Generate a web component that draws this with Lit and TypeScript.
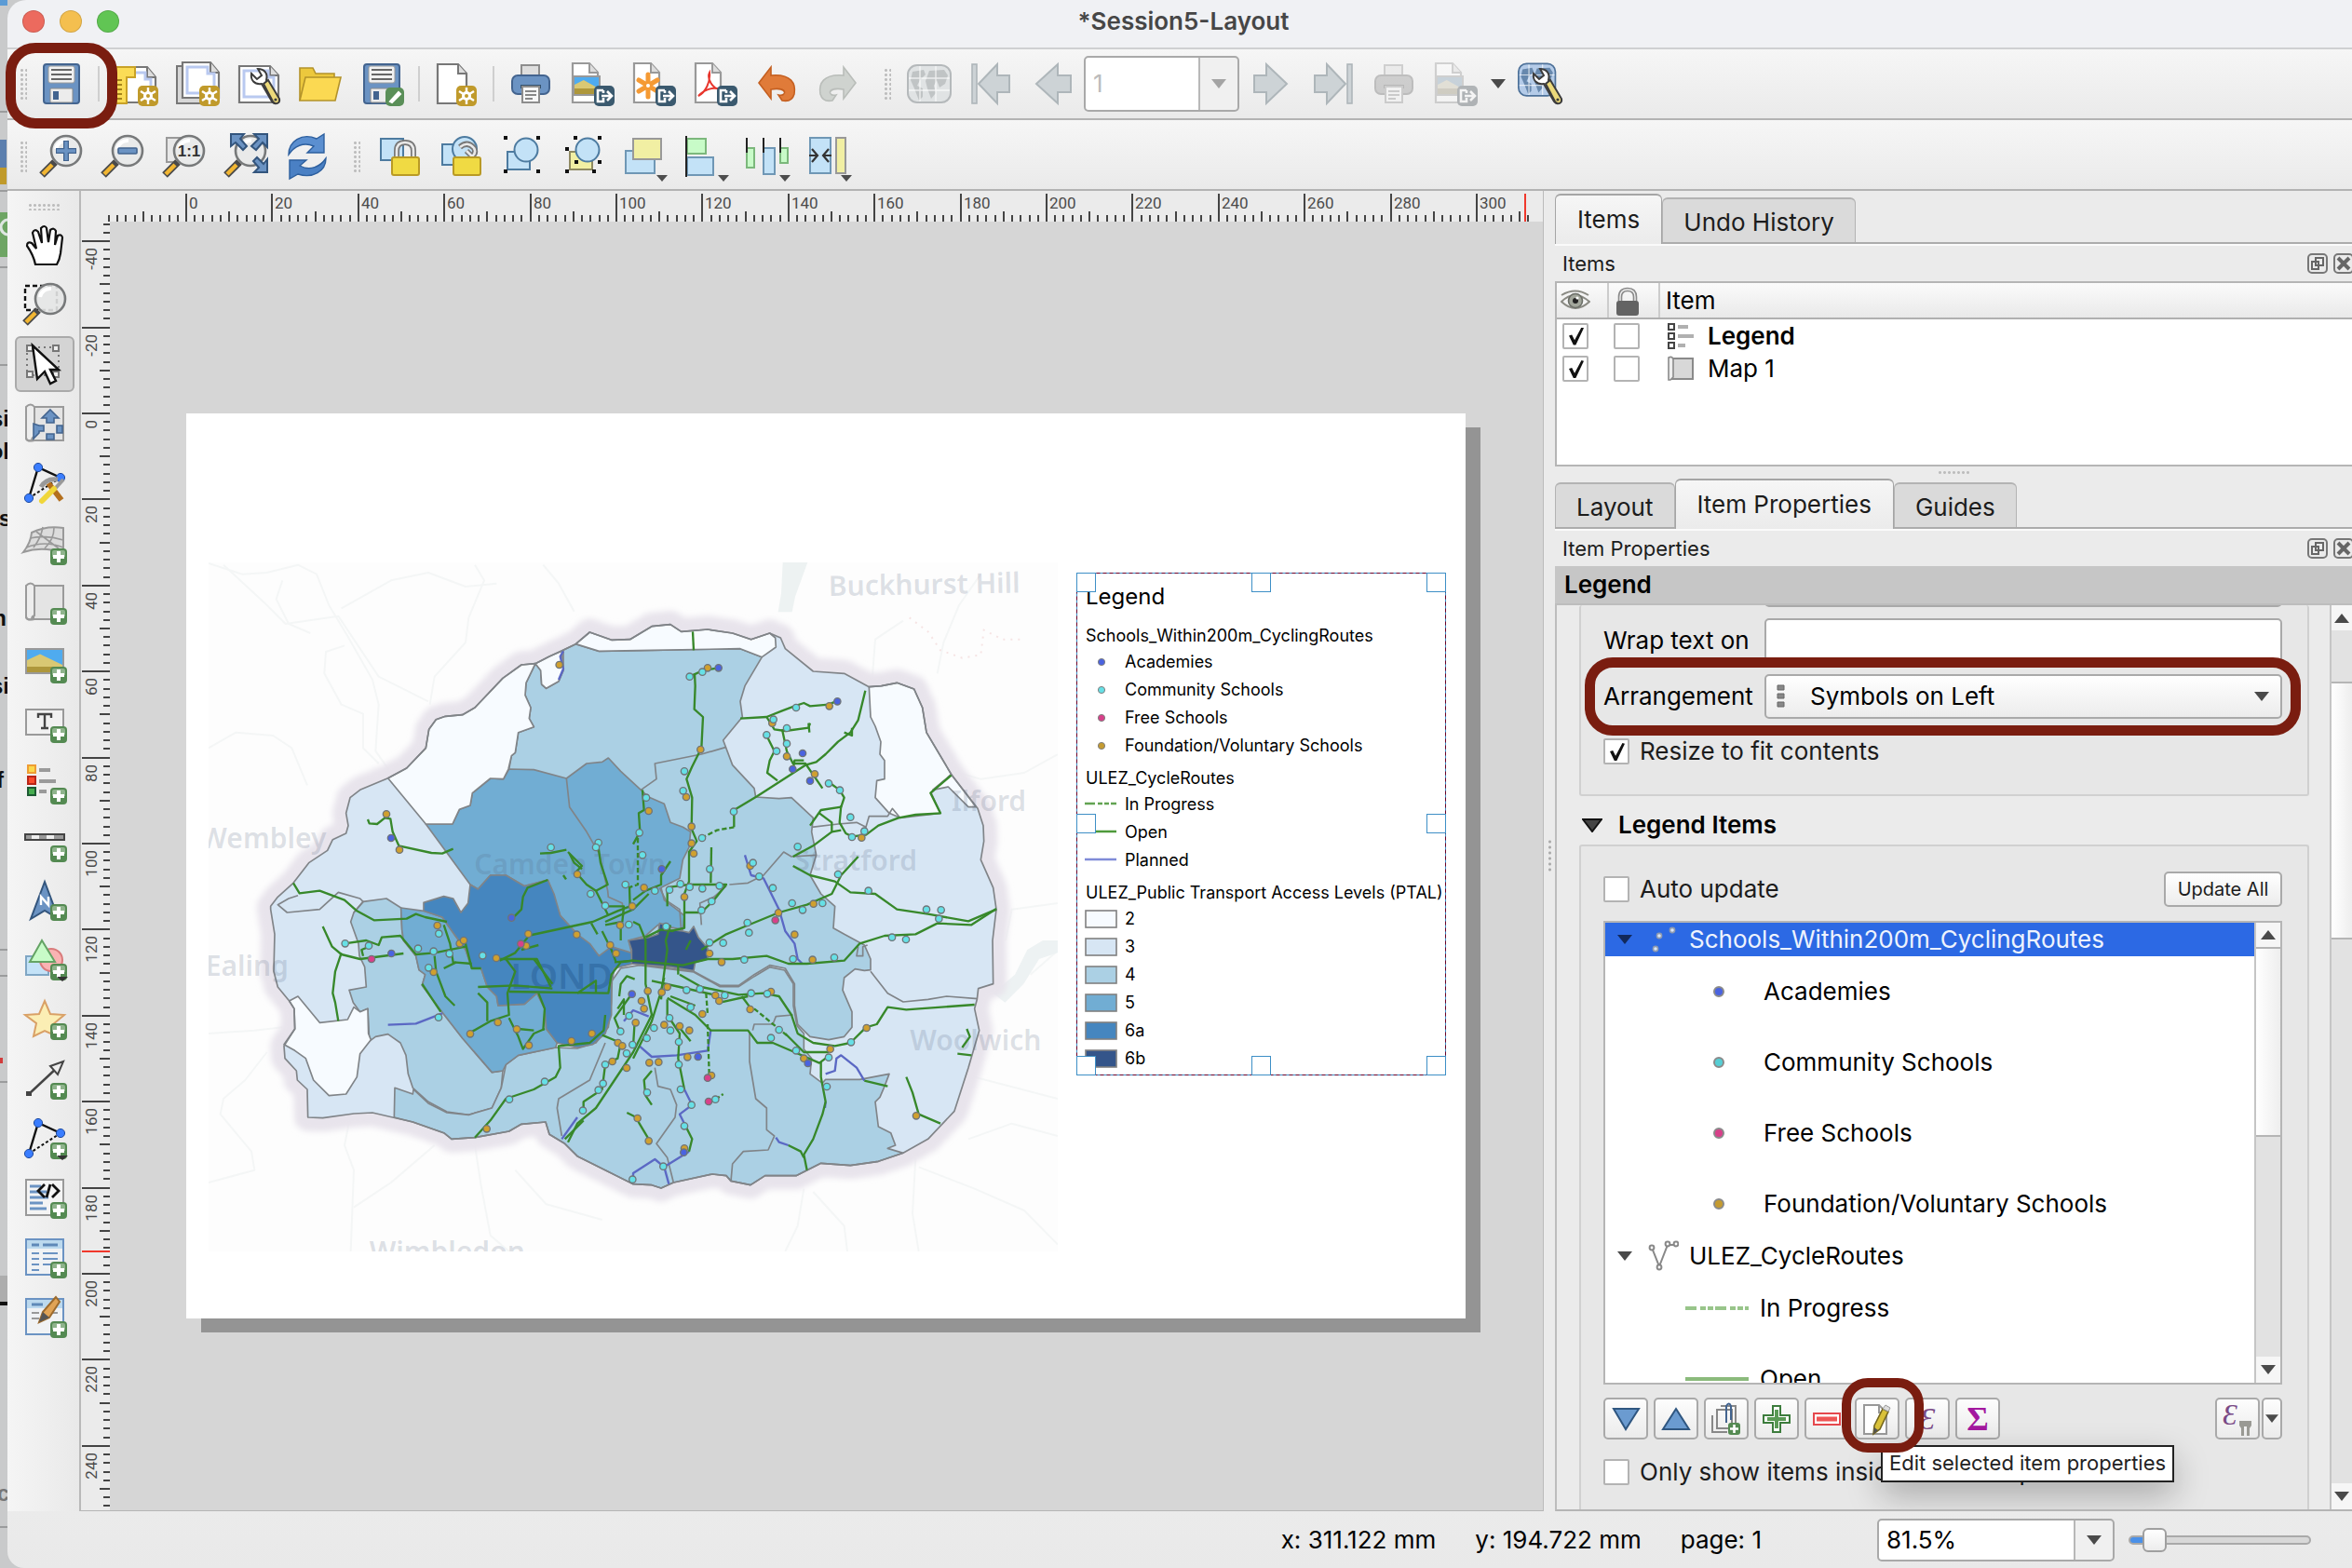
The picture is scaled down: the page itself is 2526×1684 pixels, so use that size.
import { LitElement, html, css, svg, nothing, SVGTemplateResult } from "lit";
import { customElement } from "lit/decorators.js";

/* ---------- icon parts, all on a 48 x 48 grid ---------- */

const plusBadge = (x = 30, y = 28) => svg`<g transform="translate(${x} ${y})">
  <rect width="18" height="18" rx="4" fill="#548a52"/><path d="M2 9V4q0-2 2-2h10q2 0 2 2v5z" fill="#8fb48c"/>
  <path d="M9 3v12M3 9h12" stroke="#fff" stroke-width="4"/></g>`;
const starBadge = (x = 26, y = 26) => svg`<g transform="translate(${x} ${y})">
  <rect width="22" height="22" rx="5" fill="#c09a2b"/><path d="M11 2v18M3 6l16 10M19 6L3 16" stroke="#fff" stroke-width="2.4"/>
  <circle cx="11" cy="11" r="5" fill="#fff"/><circle cx="11" cy="11" r="2" fill="#c09a2b"/></g>`;
const exportBadge = svg`<g transform="translate(26 26)"><rect width="22" height="22" rx="5" fill="#3a596e"/>
  <path d="M10 5H4v12h6v-4M10 5v3M8 11h10M14 6l5 5-5 5" fill="none" stroke="#fff" stroke-width="2.6"/></g>`;
const wrench = svg`<path d="M16 13l6 6 5-4-4-7c7 0 11 5 9 12l13 20c1 5-4 7-7 3L27 24c-8 1-12-4-11-11z" fill="#fff" stroke="#3c3c3c" stroke-width="2"/>
  <path d="M29 24l5-4 12 20c1 5-4 7-7 3z" fill="#ecd97a" stroke="#3c3c3c" stroke-width="2"/><circle cx="42" cy="41" r="1.6" fill="#3c3c3c"/>`;
const lens = svg`<path d="M17 30L3 44" stroke="#4a4a4a" stroke-width="8"/><path d="M14 33L4 43" stroke="#f2b632" stroke-width="4.4"/>
  <circle cx="29" cy="18" r="16" fill="#e9eaea" stroke="#77797a" stroke-width="2.6"/><path d="M18 16a11 11 0 0 1 12-9" stroke="#fff" stroke-width="4" fill="none"/>`;
const floppy = svg`<rect x="5" y="3" width="38" height="42" rx="3" fill="#6b93c3" stroke="#43648f" stroke-width="2"/>
  <rect x="10" y="5" width="28" height="18" rx="2" fill="#f1f1f1" stroke="#9a9a9a"/><path d="M13 9h22M13 14h22M13 19h22" stroke="#666" stroke-width="2"/>
  <rect x="12" y="29" width="24" height="15" rx="1" fill="#ececec" stroke="#8a8a8a"/><rect x="15" y="32" width="6" height="9" fill="#43648f"/>`;
const sheet = (c = "#777") => svg`<path d="M7 2h18l9 10v32H7z" fill="#fff" stroke="${c}" stroke-width="2.2"/><path d="M25 2v10h9" fill="#ddd" stroke="${c}" stroke-width="2"/>`;
const printer = svg`<rect x="14" y="4" width="19" height="16" fill="#dedede" stroke="#8d8d8d" stroke-width="2"/>
  <rect x="4" y="15" width="40" height="20" rx="6" fill="#6b93c3" stroke="#43648f" stroke-width="2"/><rect x="13" y="25" width="22" height="4" fill="#34526f"/>
  <path d="M15 27h18v17H15z" fill="#f7f7f7" stroke="#8d8d8d" stroke-width="2"/><path d="M18 32h12M18 36h12M18 40h8" stroke="#888" stroke-width="2"/>`;
const landscape = (x: number, y: number, w: number, h: number) => svg`<rect x="${x}" y="${y}" width="${w}" height="${h}" fill="#4fabef" stroke="#999" stroke-width="2"/>
  <path d="M${x + 1} ${y + h - 1}v${-h * 0.5}l${w * 0.35} ${-h * 0.25}L${x + w - 1} ${y + h * 0.65}V${y + h - 1}z" fill="#d9c873"/>
  <path d="M${x + 1} ${y + h - 1}v-6h${w - 2}v6z" fill="#ae973b"/>`;
const roll = svg`<path d="M12 6h32v36H12z" fill="#e4e4e4" stroke="#9a9a9a" stroke-width="2"/><path d="M4 6q5-5 9 0v32q-3 1-3 4-6 1-6-3z" fill="#ededed" stroke="#9a9a9a" stroke-width="2"/>
  <path d="M4 39q0 5 9 3" stroke="#9a9a9a" stroke-width="2" fill="none"/>`;
const globe = (fill: string, land: string) => svg`<rect x="1" y="4" width="46" height="40" rx="10" fill="${fill}" stroke="${land}" stroke-width="2"/>
  <path d="M6 11l12-2 2 5-6 6-3 6 6 3v9l-4 4-5-13-4-9zM24 10l16-1 4 6-3 9-6 4-3-8-3 6 2 8-5 6-4-11-2-8z" fill="${land}" opacity=".75"/>
  <path d="M2 18h44M2 31h44M14 5v38M31 5v38" stroke="#fff" stroke-width="1.4" opacity=".7"/>`;
const arrowLeft = svg`<path d="M44 15H30V3L7 24l23 21V33h14z" fill="#cdd3d6" stroke="#aeb6ba" stroke-width="2"/>`;
const arrowRight = svg`<path d="M6 15h13V3l22 21-22 21V33H6z" fill="#cdd3d6" stroke="#aeb6ba" stroke-width="2"/>`;
const turn = (fill: string, stroke: string) => svg`<path d="M5 23L18 6v9c22-2 27 9 25 20-2 7-8 8-13 7l-4-6c9 2 11-9-8-6v10z" fill="${fill}" stroke="${stroke}" stroke-width="1.6"/>`;
const node = (x: number, y: number) => svg`<circle cx="${x}" cy="${y}" r="4.6" fill="#3a7dff" stroke="#1f4a9e"/>`;
const triNodes = svg`<path d="M7 40L17 7l24 11" fill="none" stroke="#111" stroke-width="2.4"/><path d="M7 40l34-22" stroke="#111" stroke-width="2" stroke-dasharray="3 2.4"/>${node(7, 40)}${node(17, 7)}${node(41, 18)}`;
const menuMark = svg`<path d="M37 44h12l-6 7z" fill="#4d4d4d"/>`;
const handles = (pts: number[][]) => pts.map(([x, y]) => svg`<rect x="${x - 2}" y="${y - 2}" width="4" height="4" fill="#111"/>`);

const icons: Record<string, SVGTemplateResult> = {
  save: floppy,
  newLayout: svg`<path d="M4 6h32l9 11v27H4z" fill="#fff" stroke="#777" stroke-width="2.2"/><path d="M36 6v11h9" fill="#ddd" stroke="#777" stroke-width="2"/>
    <path d="M16 12h18v7h6v14" stroke="#b9c9f0" stroke-width="3" fill="none"/><path d="M3 6h20v11h-9v28H3z" fill="#fbdc56" stroke="#c9a227" stroke-width="2"/>
    <path d="M4 20h5M4 25h5M4 30h5M4 35h5M4 40h5" stroke="#a5831c" stroke-width="2"/>${starBadge()}`,
  dupLayout: svg`<path d="M2 5h30v40H2z" fill="#d7d7d7" stroke="#777" stroke-width="2"/><path d="M8 1h30l9 11v27H8z" fill="#fff" stroke="#777" stroke-width="2.2"/>
    <path d="M38 1v11h9" fill="#ddd" stroke="#777" stroke-width="2"/><path d="M13 6h22v7h7v21H13z" fill="none" stroke="#b9c9f0" stroke-width="3"/>${starBadge()}`,
  manager: svg`<path d="M3 5h33l9 10v29H3z" fill="#fff" stroke="#777" stroke-width="2.2"/><path d="M36 5v10h9" fill="#ddd" stroke="#777" stroke-width="2"/>
    <path d="M8 10h26v7h6v21H8z" fill="none" stroke="#b9c9f0" stroke-width="3"/>${wrench}`,
  folder: svg`<path d="M2 7h14l3 6h20v28H2z" fill="#ecc83d" stroke="#b3922a" stroke-width="1.6"/><path d="M8 17h38l-6 25H2z" fill="#fbd952" stroke="#b3922a" stroke-width="1.6"/>`,
  saveAs: svg`${floppy}<g transform="translate(28 28)"><rect width="20" height="20" rx="5" fill="#5a8f58"/><path d="M5 15L14 5l2 2-9 9z" fill="#fff" stroke="#fff" stroke-width="2"/></g>`,
  newPage: svg`<path d="M4 3h22l9 10v32H4z" fill="#fff" stroke="#777" stroke-width="2.2"/><path d="M26 3v10h9" fill="#ddd" stroke="#777" stroke-width="2"/>${starBadge(24, 26)}`,
  print: printer,
  exportImage: svg`<g transform="translate(-4 0)">${sheet("#999")}</g>${landscape(4, 16, 28, 20)}${exportBadge}`,
  exportSvg: svg`<g transform="translate(-4 0)">${sheet("#999")}</g><path d="M18 14v24M8 20l20 12M28 20L8 32" stroke="#f59a34" stroke-width="5" stroke-linecap="round"/><circle cx="18" cy="26" r="2" fill="#fff"/>${exportBadge}`,
  exportPdf: svg`<g transform="translate(-4 0)">${sheet("#999")}</g><path d="M6 37c8-4 13-15 12-25-3 6 3 18 12 18-8-3-17 0-24 7z" fill="none" stroke="#e8352c" stroke-width="2"/>${exportBadge}`,
  undo: turn("#e07b39", "#c45f20"),
  redo: svg`<g transform="translate(48 0) scale(-1 1)">${turn("#cfd3cf", "#b9bdb9")}</g>`,
  atlas: globe("#e0e3e4", "#b5b9bb"),
  first: svg`<rect x="4" y="3" width="5" height="42" fill="#cdd3d6" stroke="#aeb6ba" stroke-width="1.6"/><path d="M44 15H31V3L11 24l20 21V33h13z" fill="#cdd3d6" stroke="#aeb6ba" stroke-width="2"/>`,
  prev: arrowLeft,
  next: arrowRight,
  last: svg`<rect x="40" y="3" width="5" height="42" fill="#cdd3d6" stroke="#aeb6ba" stroke-width="1.6"/><path d="M5 15h13V3l20 21-20 21V33H5z" fill="#cdd3d6" stroke="#aeb6ba" stroke-width="2"/>`,
  printOff: svg`<g opacity=".35" style="filter:grayscale(1)">${printer}</g>`,
  exportOff: svg`<g opacity=".38" style="filter:grayscale(.7)"><g transform="translate(-4 0)">${sheet("#999")}</g>${landscape(4, 16, 28, 20)}${exportBadge}</g>`,
  settings: svg`<g transform="translate(-1 -1) scale(.86)">${globe("#b4cbe8", "#4d7199")}</g>${wrench}`,
  zoomIn: svg`${lens}<path d="M29 7v22M18 18h22" stroke="#43648f" stroke-width="6"/><path d="M29 8v20M19 18h20" stroke="#6b93c3" stroke-width="3.4"/>`,
  zoomOut: svg`${lens}<rect x="19" y="15" width="20" height="6" rx="1" fill="#6b93c3" stroke="#43648f" stroke-width="1.6"/>`,
  zoomActual: svg`<rect x="5" y="4" width="20" height="26" fill="#e8e8e8" stroke="#999" stroke-width="2"/>${lens}<text x="29" y="24" text-anchor="middle" font-family="Liberation Sans, sans-serif" font-weight="700" font-size="17" fill="#333">1:1</text>`,
  zoomFull: svg`${lens}<g fill="#6b93c3" stroke="#33557d" stroke-width="2"><path d="M8 0h14l-4 5 7 8-4 4-8-8-5 4z"/><path d="M47 0v14l-5-5-7 8-5-4 8-8-5-5z"/><path d="M47 41H33l5-5-6-7 4-4 7 7 4-5z"/></g>`,
  refresh: svg`<path d="M4 22C4 8 18-2 34 5l8-5v20H24l7-7C20 8 10 13 4 22z" fill="#5b8fd0" stroke="#2d5f9e" stroke-width="1.4"/>
    <path d="M44 26c0 14-14 22-30 17l-9 5V28h18l-7 6c11 6 22 1 28-8z" fill="#4a80c4" stroke="#2d5f9e" stroke-width="1.4"/>`,
  lock: svg`<rect x="5" y="5" width="24" height="23" fill="#c3e2f7" stroke="#4d7ba0" stroke-width="2"/><path d="M22 27V18q0-9 9-9t9 9v9" fill="none" stroke="#777" stroke-width="6"/><path d="M22 27V18q0-9 9-9t9 9v9" fill="none" stroke="#e9e9e9" stroke-width="2.6"/><rect x="17" y="25" width="29" height="19" rx="2" fill="#f0da43" stroke="#b99a24" stroke-width="2"/>`,
  unlock: svg`<rect x="5" y="11" width="18" height="22" fill="#c3e2f7" stroke="#4d7ba0" stroke-width="2"/><circle cx="29" cy="16" r="13" fill="#c3e2f7" stroke="#4d7ba0" stroke-width="2"/><path d="M24 14q8-7 15 1 3 5-2 9l-6-6" fill="none" stroke="#777" stroke-width="6"/><path d="M24 14q8-7 15 1 3 5-2 9l-6-6" fill="none" stroke="#e9e9e9" stroke-width="2.6"/><rect x="17" y="25" width="29" height="19" rx="2" fill="#f0da43" stroke="#b99a24" stroke-width="2"/>`,
  group: svg`<rect x="9" y="19" width="24" height="19" fill="#c3e2f7" stroke="#4d7ba0" stroke-width="2"/><circle cx="29" cy="17" r="12.5" fill="#c3e2f7" stroke="#4d7ba0" stroke-width="2"/>${handles([[7, 4], [42, 4], [7, 40], [42, 40]])}`,
  ungroup: svg`<rect x="10" y="19" width="24" height="19" fill="#f1efa3" stroke="#8f8a62" stroke-width="2"/><circle cx="29" cy="17" r="12.5" fill="#c3e2f7" stroke="#4d7ba0" stroke-width="2"/>${handles([[16, 4], [42, 4], [7, 16], [7, 40], [36, 40], [42, 30], [17, 30]])}`,
  raise: svg`<rect x="4" y="18" width="31" height="24" fill="#c3e2f7" stroke="#6f97b5" stroke-width="2"/><rect x="12" y="5" width="30" height="22" fill="#f1efa3" stroke="#999" stroke-width="2"/>${menuMark}`,
  align: svg`<rect x="4" y="5" width="20" height="16" fill="#c8fbc8" stroke="#7cb87c" stroke-width="2"/><rect x="4" y="25" width="28" height="19" fill="#c3e2f7" stroke="#6f97b5" stroke-width="2"/><path d="M3 2v44" stroke="#222" stroke-width="2"/>${menuMark}`,
  distribute: svg`<rect x="2" y="15" width="8" height="21" fill="#c8fbc8" stroke="#7cb87c" stroke-width="2"/><rect x="20" y="15" width="12" height="28" fill="#c3e2f7" stroke="#6f97b5" stroke-width="2"/><rect x="38" y="15" width="8" height="16" fill="#c8fbc8" stroke="#7cb87c" stroke-width="2"/><path d="M2 4v16M20 4v16M38 4v16" stroke="#222" stroke-width="2"/>${menuMark}`,
  resize: svg`<rect x="4" y="4" width="22" height="38" fill="#c3e2f7" stroke="#6f97b5" stroke-width="2"/><rect x="32" y="4" width="10" height="38" fill="#f1efa3" stroke="#999" stroke-width="2"/><path d="M3 23h8M27 23h-8M6 16l6 7-6 7M24 16l-6 7 6 7" fill="none" stroke="#333" stroke-width="2.2"/>${menuMark}`,
  pan: svg`<path d="M14 45Q12 35 5 25q0-5 5-3l5 6-4-17q2-5 6-1l4 12-1-16q4-4 6 0l2 15 2-13q4-3 6 1l-1 15 3-10q4-2 5 2l-2 17q-1 7-4 12z" fill="#fff" stroke="#111" stroke-width="2.2"/>`,
  zoomArea: svg`<rect x="3" y="4" width="34" height="26" fill="none" stroke="#111" stroke-width="2.4" stroke-dasharray="5 3"/><path d="M17 30L3 44" stroke="#4a4a4a" stroke-width="8"/><path d="M14 33L4 43" stroke="#f2b632" stroke-width="4.4"/><circle cx="30" cy="18" r="16" fill="#e4e5e5" fill-opacity=".9" stroke="#77797a" stroke-width="2.6"/><path d="M19 16a11 11 0 0 1 12-9" stroke="#fff" stroke-width="4" fill="none"/>`,
  select: svg`<rect x="5" y="6" width="34" height="30" fill="none" stroke="#777" stroke-width="2" stroke-dasharray="2 4"/><g fill="#eee" stroke="#777" stroke-width="2"><rect x="5" y="4" width="6" height="6"/><rect x="33" y="4" width="6" height="6"/><rect x="5" y="32" width="6" height="6"/><rect x="33" y="32" width="6" height="6"/></g><path d="M11 4l5 36 8-8 6 13 6-3-6-12h9z" fill="#fff" stroke="#111" stroke-width="2.4"/>`,
  moveContent: svg`${roll}<g fill="#6b93c3" stroke="#43648f" stroke-width="1.6"><path d="M30 9l9 9h-5v5h-8v-5h-5z"/><path d="M12 24v16l6-6v-2h5v-6h-5z"/><path d="M37 26h6v8h-6zM26 35h8v6h-8z"/></g>`,
  editNodes: svg`${triNodes}<path d="M28 24l14 18" stroke="#b36f1e" stroke-width="6"/><path d="M20 28q6-10 18-8" stroke="#999" stroke-width="5" fill="none"/><path d="M44 20L34 31" stroke="#999" stroke-width="4"/><path d="M34 30L21 43" stroke="#f0d63a" stroke-width="6" stroke-linecap="round"/>`,
  add3d: svg`<path d="M1 34Q9 24 10 13q16-8 34-5v27Q22 27 1 34z" fill="#dcdcdc" stroke="#999" stroke-width="2"/><path d="M8 19q18-4 36 2M4 29q20-8 40 0M22 7q-2 12-10 22M34 8q0 12-10 22M15 12l24 18" fill="none" stroke="#999" stroke-width="1.6"/>${plusBadge(30, 30)}`,
  addMap: svg`${roll}${plusBadge(30, 30)}`,
  addPicture: svg`${landscape(4, 10, 40, 26)}${plusBadge(30, 29)}`,
  addLabel: svg`<rect x="4" y="11" width="40" height="27" fill="#f1f1f1" stroke="#999" stroke-width="2"/><path d="M17 20v-4h14v4M24 16v15M20 31h8" stroke="#444" stroke-width="2.4" fill="none"/>${plusBadge(30, 29)}`,
  addLegend: svg`<g transform="translate(0 3)"><g stroke-width="2"><rect x="6" y="4" width="8" height="8" fill="#fbd84b" stroke="#ee9d34"/><rect x="6" y="16" width="8" height="8" fill="#fb4a2b" stroke="#b82518"/><rect x="6" y="28" width="8" height="8" fill="#46ad4f" stroke="#1d5a33"/></g><path d="M18 9h12M18 21h18M18 32h8" stroke="#9a9a9a" stroke-width="4"/>${plusBadge()}</g>`,
  addScale: svg`<rect x="3" y="17" width="42" height="6" fill="#eee" stroke="#444" stroke-width="2"/><path d="M4 20h6M18 20h8M34 20h10" stroke="#999" stroke-width="4"/>${plusBadge(30, 29)}`,
  addNorth: svg`<path d="M24 4L9 44l15-9 15 9z" fill="#6b93c3" stroke="#33557d" stroke-width="2"/><path d="M20 29V20l8 9V20" fill="none" stroke="#fff" stroke-width="2.4"/>${plusBadge()}`,
  addShape: svg`<rect x="4" y="20" width="24" height="20" fill="#c3e2f7" stroke="#7fa6c4" stroke-width="2"/><circle cx="31" cy="24" r="12" fill="#f9b3b3" stroke="#d97b7b" stroke-width="2"/><path d="M21 3l14 23H8z" fill="#c8fbc8" stroke="#64a364" stroke-width="2"/>${plusBadge()}<path d="M37 42h12l-6 5z" fill="#333"/>`,
  addStar: svg`<path d="M24 4l6 14 15 1-12 10 4 13-13-6-12 6 3-14L3 19l15-1z" fill="#fbeeb4" stroke="#d9a066" stroke-width="2"/>${plusBadge()}`,
  addArrow: svg`<path d="M7 40L38 11" stroke="#444" stroke-width="2.4"/><path d="M44 5L30 10l8 9z" fill="#eee" stroke="#444" stroke-width="2"/><rect x="4" y="37" width="6" height="5" fill="#444"/>${plusBadge()}`,
  addNodes: svg`${triNodes}${plusBadge()}<path d="M37 42h12l-6 5z" fill="#333"/>`,
  addHtml: svg`<rect x="4" y="4" width="40" height="38" fill="#f4f4f4" stroke="#999" stroke-width="2"/><path d="M8 11h12M8 17h18M8 23h20M8 29h14M8 35h18" stroke="#6b93c3" stroke-width="3"/><path d="M24 9l-7 7 7 7M32 9l7 7-7 7M30 9l-4 14" fill="none" stroke="#111" stroke-width="2.8"/>${plusBadge()}`,
  addTable: svg`<rect x="4" y="4" width="40" height="38" fill="#f0f2f4" stroke="#6b93c3" stroke-width="2"/><rect x="5" y="5" width="38" height="9" fill="#bcd9ee"/><path d="M10 10h8M22 10h16" stroke="#5f89b8" stroke-width="3"/><path d="M10 19h8M22 19h16M10 25h8M22 25h16M10 31h8M22 31h10M10 37h8" stroke="#6b93c3" stroke-width="2"/>${plusBadge()}`,
  addFixed: svg`<rect x="4" y="4" width="40" height="38" fill="#f0f2f4" stroke="#6b93c3" stroke-width="2"/><rect x="5" y="5" width="38" height="9" fill="#bcd9ee"/><path d="M10 10h12" stroke="#5f89b8" stroke-width="3"/><path d="M10 19h8M10 25h8M24 19h14" stroke="#999" stroke-width="2"/><path d="M36 2l-14 16-4 11 11-5L40 7z" fill="#e0a355" stroke="#9c6a2c" stroke-width="2"/><path d="M22 18l-4 11 11-5z" fill="#555"/>${plusBadge()}`,
};

const ico = (name: string) => html`<svg class="ico" viewBox="0 0 48 48" aria-hidden="true">${icons[name]}</svg>`;
const tri = (dir: "up" | "down") =>
  html`<svg class="tri" viewBox="0 0 16 12" aria-hidden="true"><path d=${dir === "up" ? "M0 11L8 1l8 10z" : "M0 1h16L8 11z"} fill="#4a4a4a"/></svg>`;

/* ---------- toolbars ---------- */

type Tool = { id: string; label: string } | "sep" | "grip";
const mainTools: Tool[] = [
  "sep",
  { id: "newLayout", label: "New Layout" }, { id: "dupLayout", label: "Duplicate Layout" }, { id: "manager", label: "Layout Manager" },
  { id: "folder", label: "Add Items from Template" }, { id: "saveAs", label: "Save as Template" }, "sep",
  { id: "newPage", label: "Add Pages" }, "sep",
  { id: "print", label: "Print" }, { id: "exportImage", label: "Export as Image" }, { id: "exportSvg", label: "Export as SVG" },
  { id: "exportPdf", label: "Export as PDF" }, { id: "undo", label: "Undo" }, { id: "redo", label: "Redo" }, "grip",
  { id: "atlas", label: "Preview Atlas" }, { id: "first", label: "First Feature" }, { id: "prev", label: "Previous Feature" },
];
const atlasTools: Tool[] = [
  { id: "next", label: "Next Feature" }, { id: "last", label: "Last Feature" }, { id: "printOff", label: "Print Atlas" },
];
const viewTools: Tool[] = [
  { id: "zoomIn", label: "Zoom In" }, { id: "zoomOut", label: "Zoom Out" }, { id: "zoomActual", label: "Zoom to 100%" },
  { id: "zoomFull", label: "Zoom Full" }, { id: "refresh", label: "Refresh View" }, "grip",
  { id: "lock", label: "Lock Selected Items" }, { id: "unlock", label: "Unlock All Items" }, { id: "group", label: "Group Items" },
  { id: "ungroup", label: "Ungroup Items" }, { id: "raise", label: "Raise Selected Items" }, { id: "align", label: "Align Selected Items" },
  { id: "distribute", label: "Distribute Items" }, { id: "resize", label: "Resize Items" },
];
const sideTools: [string, string][] = [
  ["pan", "Pan Layout"], ["zoomArea", "Zoom"], ["select", "Select/Move Item"], ["moveContent", "Move Item Content"],
  ["editNodes", "Edit Nodes Item"], ["add3d", "Add 3D Map"], ["addMap", "Add Map"], ["addPicture", "Add Picture"],
  ["addLabel", "Add Label"], ["addLegend", "Add Legend"], ["addScale", "Add Scale Bar"], ["addNorth", "Add North Arrow"],
  ["addShape", "Add Shape"], ["addStar", "Add Marker"], ["addArrow", "Add Arrow"], ["addNodes", "Add Node Item"],
  ["addHtml", "Add HTML"], ["addTable", "Add Attribute Table"], ["addFixed", "Add Fixed Table"],
];

/* ---------- map data, three units per screen pixel ---------- */

const outline = "212,1150 235,1120 285,1075 335,1010 395,970 412,935 455,915 462,890 455,850 468,800 500,775 590,737 650,705 712,640 722,580 745,548 775,538 830,533 870,510 960,415 1020,372 1065,368 1110,345 1195,305 1240,267 1310,292 1370,290 1400,272 1440,248 1500,242 1535,265 1620,258 1700,270 1760,290 1820,270 1855,285 1870,320 1960,393 2060,400 2140,443 2180,440 2230,430 2285,450 2312,510 2325,590 2405,725 2490,835 2508,890 2510,940 2500,1000 2540,1090 2550,1160 2538,1260 2540,1400 2492,1415 2488,1450 2480,1480 2495,1550 2460,1670 2415,1810 2330,1900 2250,1945 2170,1972 2080,1985 1985,1978 1905,2018 1805,2018 1758,2048 1695,2035 1680,2018 1635,2013 1510,2040 1470,2058 1440,2048 1380,2045 1200,1955 1160,1915 1110,1885 1098,1845 1020,1852 980,1875 870,1895 795,1900 770,1880 670,1845 540,1815 480,1818 380,1832 332,1830 330,1740 298,1710 295,1680 258,1640 255,1600 290,1545 288,1480 272,1455 235,1410 222,1360 225,1240 212,1160";
const regions: [string, string][] = [
  ["#abd0e4", "1065,368 1082,390 1085,435 1100,448 1140,425 1155,390 1155,325 1195,305 1270,328 1440,325 1725,320 1795,347 1740,440 1725,490 1732,540 1670,615 1700,695 1770,770 1775,798 1850,803 1890,800 1960,865 1955,910 1970,985 1950,1050 1985,1110 2030,1150 2025,1220 2060,1240 2125,1275 2145,1320 2145,1355 2125,1357 2095,1352 2060,1380 2055,1420 2085,1490 2085,1540 2060,1570 2010,1580 1950,1570 1910,1530 1900,1470 1900,1400 1870,1350 1820,1340 1770,1370 1720,1405 1660,1405 1575,1360 1380,1335 1300,1200 1000,900 980,708 988,665 1000,655 1010,590 1060,572 1045,545 1050,510 1032,470 1035,430"],
  ["#abd0e4", "480,1170 510,1135 585,1125 632,1155 635,1225 640,1260 680,1310 690,1355 710,1370 700,1405 760,1485 830,1575 925,1685 960,1680 955,1735 925,1800 850,1822 780,1812 720,1780 670,1735 655,1690 648,1630 630,1590 590,1562 550,1570 530,1585 525,1480 500,1490 478,1460 465,1420 520,1410 515,1345 498,1310 495,1270 470,1200"],
  ["#abd0e4", "612,1735 670,1755 672,1740 720,1785 780,1815 850,1822 925,1800 955,1735 970,1660 1010,1630 1130,1605 1200,1608 1260,1590 1300,1540 1310,1460 1312,1390 1340,1350 1400,1340 1575,1362 1660,1409 1720,1409 1770,1376 1820,1346 1868,1356 1896,1400 1896,1470 1908,1535 1930,1560 1930,1610 1955,1640 1950,1690 1990,1720 2000,1708 2110,1708 2205,1690 2190,1730 2175,1765 2160,1780 2170,1860 2210,1880 2225,1920 2200,1930 2250,1945 2170,1972 2080,1985 1985,1978 1905,2018 1805,2018 1758,2048 1695,2035 1680,2018 1635,2013 1510,2040 1470,2058 1440,2048 1380,2045 1200,1955 1160,1915 1110,1885 1098,1845 1020,1852 980,1875 870,1895 795,1900 770,1880 670,1845 610,1830"],
  ["#71add3", "980,708 1060,710 1165,738 1230,690 1280,685 1300,672 1340,715 1405,775 1430,798 1480,820 1500,880 1540,895 1565,910 1560,960 1540,1000 1530,1060 1470,1090 1480,1130 1520,1160 1545,1180 1540,1225 1460,1210 1420,1245 1365,1260 1375,1300 1320,1340 1270,1310 1200,1240 1145,1180 1105,1065 1030,1085 970,1050 920,1050 880,1095 855,1080 712,885 798,885 820,838 855,825 862,785 920,738 962,740"],
  ["#71add3", "632,1155 705,1165 765,1185 800,1235 840,1290 860,1350 890,1350 910,1410 940,1440 945,1470 1030,1465 1070,1430 1095,1480 1100,1545 1135,1590 1130,1605 1010,1630 970,1660 960,1680 925,1685 830,1575 760,1485 700,1405 710,1370 690,1355 680,1310 640,1260 635,1225"],
  ["#4586bf", "705,1165 705,1138 770,1118 800,1125 825,1170 848,1140 855,1080 880,1095 920,1050 970,1050 1030,1085 1105,1065 1125,1110 1145,1180 1200,1240 1240,1270 1270,1310 1310,1280 1375,1300 1380,1335 1320,1350 1310,1400 1310,1500 1290,1560 1250,1595 1200,1605 1135,1590 1100,1545 1095,1480 1070,1430 1030,1465 945,1470 940,1440 910,1410 890,1350 860,1350 840,1290 800,1235 765,1185"],
  ["#34558a", "1365,1260 1430,1250 1460,1240 1465,1205 1490,1210 1500,1225 1540,1230 1560,1235 1575,1215 1590,1250 1620,1285 1620,1320 1580,1330 1575,1358 1500,1345 1375,1335 1375,1290"],
  ["#f7fbff", "590,737 650,705 712,640 722,580 745,548 775,538 830,533 870,510 960,415 1020,372 1065,368 1035,430 1032,470 1050,510 1045,545 1060,572 1010,590 1000,655 988,665 978,708 962,740 920,738 862,785 855,825 820,838 798,885 712,885"],
  ["#f7fbff", "1065,368 1110,345 1150,328 1155,390 1140,425 1100,448 1085,435 1082,390"],
  ["#f7fbff", "1195,305 1240,267 1310,292 1370,290 1400,272 1440,248 1500,242 1535,265 1620,258 1700,270 1760,290 1820,270 1838,285 1840,315 1795,347 1725,320 1440,325 1270,328"],
  ["#f7fbff", "2140,443 2180,440 2230,430 2285,450 2312,510 2325,590 2405,725 2340,785 2370,850 2240,865 2205,850 2160,800 2165,745 2190,740 2190,680 2175,660 2178,620 2160,570 2145,540"],
  ["#f7fbff", "2345,775 2395,765 2460,830 2485,830 2405,725"],
  ["#f7fbff", "272,1455 300,1440 370,1525 460,1515 480,1475 500,1490 525,1480 527,1560 535,1580 500,1625 490,1700 455,1755 400,1760 350,1710 325,1640 290,1615 255,1595 290,1545 288,1480"],
];
const borders = [
  "1405,775 1455,740 1450,690 1600,660 1680,637", "1165,738 1175,830 1230,910 1270,980 1298,1100 1300,1120 1345,1140 1350,1180", "1690,1080 1750,1075 1800,1050 1865,975 1890,990 1970,985",
  "1290,1590 1240,1710 1140,1770 1135,1800 1150,1890", "1450,1670 1460,1730 1500,1740 1520,1790 1515,1830 1455,1915 1490,1960 1510,2040",
  "1755,1560 1755,1650 1775,1770 1810,1800 1810,1870 1835,1890 1815,1935 1735,1940 1700,1980 1695,2035", "1765,1550 1770,1530 1830,1530 1840,1505 1895,1500",
  "2145,1360 2200,1430 2250,1458 2330,1450 2390,1440 2490,1448", "300,1115 270,1125 235,1145 265,1170 370,1160 430,1105 500,1125 510,1135 480,1170", "1600,1210 1595,1140 1640,1120 1680,1085",
  "1465,1090 1485,1130 1530,1160 1535,1230", "1955,895 2040,885 2100,880 2130,895 2140,860 2200,860 2215,835 2240,865", "2105,1280 2100,1310 2120,1310 2120,1280 2135,1275",
];
const openRoutes = [
  "525,870 530,883 555,885 580,865 598,868 605,910 625,955 730,978 765,980 800,965", "285,1075 305,1108 370,1100 450,1130 490,1165 545,1195 650,1190 680,1175 710,1185 780,1200",
  "1105,1065 1040,1090 1025,1120 1020,1160 1000,1180 988,1190", "1080,980 1115,978 1165,968", "1170,975 1215,1020 1195,1040 1230,1080 1260,1100 1285,1150 1300,1180", "1268,960 1275,1010 1298,1080 1260,1100",
  "1175,980 1190,1010 1215,1030", "1410,775 1415,840 1398,850 1402,910 1380,950", "1368,1090 1370,1150", "1572,265 1575,325", "1562,410 1605,390 1655,382",
  "1578,400 1580,440 1577,515 1605,540 1600,640 1570,700 1552,740 1570,800 1568,900 1585,940 1560,975 1560,1070 1545,1110 1545,1220 1500,1230",
  "1725,545 1810,540 1860,520 1900,505 1930,495 1950,505 2010,500 2038,488", "1810,540 1835,580 1870,585 1945,575 1950,560", "1948,590 1945,560", "1860,580 1875,650 1895,690 1935,690 1990,770", "1895,710 1900,680 1930,680",
  "1810,600 1835,650 1820,680 1812,720 1845,745", "2128,455 2105,550 2080,590 2040,620 2000,660 1970,685 1935,695 1780,795 1705,840 1705,895", "2085,575 2085,600 2060,590",
  "2010,750 2045,775 2060,800 2050,830 1985,840 1950,890", "2050,825 2045,880 2065,915 2085,925 2130,920 2170,890 2235,865 2290,855 2370,850 2338,785 2405,728", "1980,850 2020,880 2020,910 1960,955 1895,990", "2020,910 2050,905",
  "1895,1020 1950,1050 2030,1070 2080,1105 2160,1110 2230,1160 2330,1175 2460,1198 2550,1160", "2105,990 2050,1050 2020,1110 1940,1145 1850,1170 1740,1215 1680,1240 1600,1290",
  "2550,1158 2470,1210 2360,1205 2290,1240 2190,1245 2110,1270 2060,1325 1940,1335 1880,1335 1810,1310 1700,1320 1620,1320 1540,1340 1380,1325 1320,1330",
  "1632,960 1630,1075", "1500,1088 1560,1080 1680,1080 1640,1130 1600,1170 1545,1170", "1500,1005 1470,1050 1470,1080 1420,1100 1380,1130", "1490,1090 1490,1150",
  "1530,1370 1600,1410 1720,1435 1800,1430 1850,1440 1890,1500 1910,1560 1960,1590 2030,1600 2080,1590 2130,1540 2165,1530 2200,1475 2260,1483 2300,1480 2480,1467",
  "1490,1445 1580,1500 1630,1550 1750,1550 1780,1590 1830,1590 1900,1620 1980,1655 2000,1640", "1730,1440 1760,1480", "1870,1560 1930,1620 2010,1620", "1440,1390 1530,1410 1640,1435 1660,1460 1750,1440",
  "1985,1650 1985,1700 2000,1780 1990,1820 1960,1900 1930,1950 1940,2000", "2125,1712 2200,1730", "1880,1920 1920,1940 1930,1960", "2260,1700 2280,1750 2300,1820 2370,1850", "2455,1545 2465,1570 2440,1605", "2425,1625 2470,1630",
  "1380,1200 1400,1210 1420,1260 1420,1400 1440,1500 1380,1620 1260,1800 1200,1850 1170,1910", "1480,1380 1465,1440 1440,1520 1380,1640", "1500,1210 1485,1260 1490,1290 1475,1400 1470,1450", "1420,1250 1470,1225 1510,1230", "1550,1290 1565,1260", "1525,1340 1525,1370",
  "1490,1450 1490,1500 1530,1560 1525,1640 1545,1740", "1500,1440 1580,1470", "1520,1530 1565,1585", "1440,1680 1415,1710 1420,1760 1440,1790", "1545,1850 1570,1900 1560,1940", "1360,1815 1390,1830 1400,1850 1430,1900",
  "380,1215 410,1280 440,1305 500,1320 640,1302", "440,1300 420,1360 412,1430 420,1460 430,1520", "450,1270 520,1260 560,1275 570,1250 630,1245 680,1305 740,1300 840,1280", "510,1310 505,1290 530,1280", "700,1400 760,1490",
  "740,1310 745,1360 775,1440 805,1470", "770,1210 790,1270 800,1330 860,1335", "840,1270 860,1350 890,1350", "770,1350 810,1330", "880,1410 1000,1405 1120,1415", "970,1320 1000,1360 975,1430 980,1500 920,1520 850,1560",
  "980,1425 1300,1430 1310,1370 1340,1330 1380,1325", "880,1430 910,1460 910,1520", "1040,1245 1180,1215 1250,1200 1330,1165 1370,1150", "950,1320 1070,1320 1115,1410", "1040,1250 1000,1300 950,1325", "1020,1290 1075,1275", "1060,1320 1120,1400",
  "980,1510 1010,1570 1025,1610 1060,1560 1095,1545", "1010,1545 1060,1550", "1075,1430 1095,1480 1090,1550", "1290,1500 1285,1550 1240,1590 1140,1600 1145,1670 1130,1700 1060,1740 970,1770 920,1840 870,1895", "1200,1430 1260,1390 1260,1430",
  "1245,1205 1265,1240", "1290,1200 1380,1160 1430,1110", "1280,1230 1310,1290 1325,1330", "1280,1565 1340,1590 1330,1640 1290,1660 1280,1740 1220,1780 1220,1810", "1335,1440 1340,1400 1360,1375 1385,1385", "1370,1440 1320,1510 1340,1560", "1385,1520 1380,1600",
  "1330,1480 1350,1450 1350,1500", "1290,1210 1345,1200 1350,1150 1300,1150", "1340,1210 1340,1260", "1160,1900 1220,1840",
];
const progressRoutes = ["1395,930 1395,1080 1365,1090", "1705,895 1650,905 1600,930", "1770,1480 1880,1570", "1620,1530 1625,1690", "1615,1430 1620,1500", "1645,1772 1670,1755", "1155,1050 1165,1065"];
const plannedRoutes = [
  "1155,328 1145,345 1155,385 1140,420", "590,1532 680,1528 765,1495", "1740,985 1760,1050 1800,1060 1850,1160 1870,1230 1900,1270 1910,1320 1925,1335", "2000,1690 2030,1680 2035,1640 2050,1630 2100,1670 2125,1712", "2000,1780 1998,1800", "1840,1895 1850,1910 1880,1920",
  "1545,1740 1570,1790 1530,1820 1545,1850", "1560,1940 1480,1990 1450,1965 1380,2010 1380,2035", "1480,1990 1495,2045", "1400,1600 1440,1635 1520,1630 1620,1615 1630,1550", "1350,1520 1380,1485 1430,1505", "1150,1900 1200,1830",
];
const schools: Record<string, string> = {
  "#d0a02f": "1142,372 585,853 627,968 1200,1047 1430,843 1415,1090 1377,1150 1620,382 1597,645 1551,798 1568,893 1568,947 1575,980 1545,1120 2012,505 1828,560 1875,667 1965,724 2116,929 1757,1020 1961,1142 1848,1171 1626,1302 1665,1330 1900,1241 1958,1322 1490,1410 1472,1427 1427,1423 1407,1455 1415,1480 1645,1437 1657,1455 1824,1425 1757,1482 1603,1497 1480,1532 1530,1536 1561,1550 2015,1610 1930,1640 2132,1542 1432,1654 1462,1652 1555,1636 1632,1695 1545,1930 1394,1833 1430,1906 2292,1825 749,1212 821,1270 834,1260 737,1362 939,1317 1042,1239 1035,1277 1198,1241 1306,1275 1325,1302 1338,1211 855,1561 944,1524 1005,1546 1044,1598 1181,1584 1247,1560 1388,1525 1331,1590 1345,1600 1313,1650 1359,1671 908,1867",
  "#66e0e6": "1422,800 1400,913 1410,985 1268,945 1260,960 1115,960 1355,1080 1243,1110 1290,1148 1562,410 1603,395 1545,715 1541,778 1704,845 1602,930 1627,1030 1450,1100 1497,1097 1532,1078 1562,1088 1603,1093 1658,1084 1633,1134 1600,1163 1905,510 1832,548 1875,576 1810,598 1875,626 1842,650 2010,754 2046,776 2080,863 2125,908 2085,927 1910,958 2040,1047 1766,1010 1786,1054 1830,1091 1892,1140 1926,1162 1990,1140 2138,1100 2325,1160 2372,1162 2365,1190 1748,1203 1486,1215 1753,1235 1626,1267 1670,1268 1738,1322 1895,1320 2028,1315 2214,1250 2259,1257 1552,1420 1595,1417 1675,1437 1760,1430 1812,1432 1565,1475 1497,1510 1447,1542 1500,1550 1527,1587 1424,1575 1850,1548 1824,1574 1905,1615 2010,1637 2082,1588 1527,1660 1645,1772 1425,1750 1533,1740 1568,1790 1545,1858 1477,1988 2004,1731 452,1270 528,1277 687,1286 737,1295 788,1303 754,1238 721,1348 753,1508 895,1309 1366,1209 1367,1503 1339,1553 1378,1596 1359,1624 1290,1660 1283,1721 1268,1742 1218,1808 1095,1715 981,1772 1378,2030",
  "#4a63e0": "600,930 988,1187 1655,382 1472,1030 2038,490 1926,657 1894,708 1950,746 1943,1656 1589,1635 1543,1943 601,1302 1376,1433",
  "#d8408a": "1838,1195 1620,1703 1623,1779 537,1320 1018,1271",
};
const streets = [
  "12,45 120,80 200,75 300,50 360,80 400,180 460,280 540,420 560,500 550,650 600,720", "60,50 190,170 260,240 430,215 560,410 720,490", "870,50 900,100 850,220 840,300 740,410 725,500", "1090,50 1140,110 1190,200",
  "250,100 230,160 270,240 340,270", "450,310 390,330 385,400 440,500 510,530 510,640 560,690", "12,640 100,590 220,600 280,640 330,760", "440,190 600,100 720,75 840,120 940,110", "12,1560 160,1550 250,1540",
  "200,1620 130,1710 60,1770 50,1820 150,1940 160,2000 12,2040", "470,1820 450,1920 480,2000 470,2262", "480,2120 600,2040 740,1920", "870,1920 890,2050 920,2210 980,2262", "1000,2000 1100,2110 1280,2160", "1930,2060 1910,2180 1870,2262",
  "1960,2070 2060,2180 2070,2262", "2290,1960 2280,2140 2300,2262", "2300,1990 2480,2060 2640,2130 2748,2240", "2748,660 2640,720 2500,740 2360,700", "2500,80 2430,180 2380,300 2360,400", "2748,1140 2600,1160 2580,1260", "2250,230 2160,290 2150,420",
  "2660,1370 2740,1300", "2460,1900 2600,1850 2748,1890", "2480,1700 2748,1770",
];

/* ---------- legend data ---------- */

const legendGroups: { title: string; rows: { kind: "dot" | "line" | "dash" | "fill"; color: string; text: string }[] }[] = [
  { title: "Schools_Within200m_CyclingRoutes", rows: [
    { kind: "dot", color: "#4a63e0", text: "Academies" }, { kind: "dot", color: "#66e0e6", text: "Community Schools" },
    { kind: "dot", color: "#d8408a", text: "Free Schools" }, { kind: "dot", color: "#c59b30", text: "Foundation/Voluntary Schools" } ] },
  { title: "ULEZ_CycleRoutes", rows: [
    { kind: "dash", color: "#62a352", text: "In Progress" }, { kind: "line", color: "#4f9a3c", text: "Open" }, { kind: "line", color: "#7f8bd8", text: "Planned" } ] },
  { title: "ULEZ_Public Transport Access Levels (PTAL)", rows: [
    { kind: "fill", color: "#f7fbff", text: "2" }, { kind: "fill", color: "#d7e6f4", text: "3" }, { kind: "fill", color: "#abd0e4", text: "4" },
    { kind: "fill", color: "#71add3", text: "5" }, { kind: "fill", color: "#4586bf", text: "6a" }, { kind: "fill", color: "#34558a", text: "6b" } ] },
];

@customElement("london-map")
class LondonMap extends LitElement {
  static styles = css`
    :host { display: block; }
    .map { display: block; width: 100%; height: 100%; background: #fdfdfd; }
    .place { font-family: "Noto Sans", sans-serif; font-weight: 600; font-size: 90px; fill: #56657f; fill-opacity: 0.2; }
    .city { font-size: 116px; fill: #17477d; fill-opacity: 0.32; }
    .route { fill: none; stroke-width: 7; stroke-linejoin: round; }
  `;
  private routes(list: string[], color: string, dash = "none") {
    return list.map((p) => svg`<polyline class="route" points=${p} stroke=${color} stroke-dasharray=${dash}/>`);
  }
  render() {
    return html`<svg class="map" viewBox="12 42 2736 2220" role="img" aria-label="Map of inner London">
      <defs><filter id="soft" x="-5%" y="-5%" width="110%" height="110%"><feGaussianBlur stdDeviation="9"/></filter></defs>
      ${streets.map((p) => svg`<polyline points=${p} fill="none" stroke="#f4f6f6" stroke-width="6" stroke-linejoin="round"/>`)}
      <path d="M1862 42h80l-40 110-10 50h-45l10-60z" fill="#edf2f2"/>
      <path d="M2540 1430l70-60 40-80 50-30h48v40l-60 20-50 80-60 60z" fill="#edf2f3"/>
      <path d="M2190 210l60 45 40 60 70 25 60-10 10-80 60 30h60" transform="translate(80 10)" fill="none" stroke="#f6e4e4" stroke-width="6" stroke-dasharray="6 18"/>
      <polygon points=${outline} fill="none" stroke="#e8e4ec" stroke-width="88" stroke-linejoin="round" filter="url(#soft)"/>
      <polygon points=${outline} fill="#d7e6f4"/>
      ${regions.map(([fill, p]) => svg`<polygon points=${p} fill=${fill} stroke="#808488" stroke-width="5" stroke-linejoin="round"/>`)}
      ${borders.map((p) => svg`<polyline points=${p} fill="none" stroke="#808488" stroke-width="5" stroke-linejoin="round"/>`)}
      <polygon points=${outline} fill="none" stroke="#808488" stroke-width="5" stroke-linejoin="round"/>
      <text class="place" x="2010" y="150" transform="rotate(-1 2010 150)">Buckhurst Hill</text>
      <text class="place" x="2405" y="842">Ilford</text>
      <text class="place" x="-14" y="962">Wembley</text>
      <text class="place" x="2" y="1375">Ealing</text>
      <text class="place" x="868" y="1046">Camden Town</text>
      <text class="place" x="1900" y="1036">Stratford</text>
      <text class="place" x="2272" y="1615">Woolwich</text>
      <text class="place" x="530" y="2294">Wimbledon</text>
      <text class="place city" x="985" y="1416">LOND</text>
      ${this.routes(plannedRoutes, "#5b68c4")}
      ${this.routes(openRoutes, "#37882a")}
      ${this.routes(progressRoutes, "#37882a", "16 8")}
      ${Object.entries(schools).map(([color, pts]) =>
        pts.split(" ").map((p) => {
          const [x, y] = p.split(",");
          return svg`<circle cx=${x} cy=${y} r="11" fill=${color} stroke="#6f7478" stroke-width="4"/>`;
        }))}
    </svg>`;
  }
}

@customElement("app-root")
class AppRoot extends LitElement {
  static styles = css`
    * { box-sizing: border-box; }
    :host { display: flex; flex-direction: column; height: 100vh; padding: 0 0 3px 8px; position: relative; overflow: hidden;
      background: #c9cacb; font-family: Inter, "Liberation Sans", sans-serif; font-size: 26px; line-height: 32px; color: #1c1c1c; }
    button, input, select { font: inherit; color: inherit; margin: 0; padding: 0; }
    button { display: flex; align-items: center; justify-content: center; border: 0; background: none; }
    .ico { width: 48px; height: 48px; flex: none; overflow: visible; display: block; }
    .tri { width: 16px; height: 12px; display: block; flex: none; }

    .behind { position: absolute; left: 0; top: 0; width: 8px; height: 100%; }
    .title { height: 53px; display: grid; grid-template-columns: 1fr auto 1fr; align-items: center; padding: 0 8px 5px 16px;
      background: #f0f1f4; border-bottom: 2px solid #cfd0d2; border-top-left-radius: 20px; position: relative; }
    .lights { display: flex; gap: 16px; }
    .light { width: 24px; height: 24px; border-radius: 50%; border: 1px solid #0002; }
    .red { background: #ec6a5e; } .amber { background: #f4bf4f; } .green { background: #61c554; }
    .name { margin: 0; font-size: 26px; font-weight: 600; color: #464646; }

    .bar { height: 76px; flex: none; display: flex; align-items: center; background: linear-gradient(#f6f6f6, #eaeaea); border-bottom: 2px solid #b3b3b3; padding: 0 0 0 13px; position: relative; }
    .bar + .bar { padding-top: 4px; }
    .tool { width: 66px; height: 64px; flex: none; position: relative; }
    .sep { width: 2px; height: 38px; margin: 0 6px; background: #cfcfcf; flex: none; }
    .grip { width: 8px; height: 34px; flex: none; background: radial-gradient(circle, #bdbdbd 1px, transparent 2px) 0 0 / 5px 5px; }
    .bar .grip { margin: 0 4px 0 0; }
    .bar .mid { margin: 0 8px 0 16px; }
    .ring { position: absolute; border: 11px solid #7a1d10; pointer-events: none; z-index: 6; }
    .save-ring { inset: -12px -27px -16px -27px; border-radius: 32px; }
    .combo { position: relative; display: flex; }
    .combo select, .field { appearance: none; width: 100%; height: 48px; border: 2px solid #a9a9a9; border-radius: 5px; background: linear-gradient(#fff, #ececec); outline: 0; }
    .combo .tri { position: absolute; right: 14px; top: 50%; margin-top: -6px; pointer-events: none; }
    .combo.edit select { background: linear-gradient(90deg, #fff calc(100% - 42px), #b8b8b8 calc(100% - 42px), #b8b8b8 calc(100% - 40px), #f0f0f0 calc(100% - 40px)); }
    .page-no { width: 167px; margin: 0 1px; }
    .combo.page-no select { height: 60px; padding-left: 8px; color: #bcbcbc; opacity: 1; }
    .page-no .tri { opacity: 0.45; }
    .drop { width: 26px; height: 40px; }

    .main { flex: 1; min-height: 0; display: flex; background: #ebebeb; }
    .side { width: 79px; flex: none; display: flex; flex-direction: column; align-items: center; border-right: 2px solid #b9b9b9; background: linear-gradient(90deg, #f5f5f5, #e9e9e9); padding: 13px 0 0 3px; }
    .side .grip { width: 36px; height: 8px; margin-bottom: 5px; }
    .side .tool { width: 64px; height: 60px; margin: 2px 0; }
    .side .on { background: #d4d4d4; border: 2px solid #aaa; border-radius: 6px; }
    .stage { flex: 1; min-width: 0; display: grid; grid-template: 33px minmax(0, 1fr) / 31px minmax(0, 1fr); border-bottom: 1px solid #b5b5b5; border-right: 1px solid #bbb; }
    .ruler { display: block; width: 100%; height: 100%; overflow: hidden; }
    .ruler text { font-family: Roboto, "Liberation Sans", sans-serif; font-size: 17px; fill: #4a4a4a; }
    .h { grid-column: 1 / 3; }
    .view { position: relative; overflow: hidden; background: #d6d6d6; }
    .page { position: absolute; left: 82px; top: 206px; width: 1374px; height: 972px; background: #fff; box-shadow: 16px 15px 0 #949494; }
    .map-item { position: absolute; left: 24px; top: 160px; width: 912px; height: 740px; }
    .legend-item { position: absolute; left: 956px; top: 171px; width: 397px; height: 540px; padding: 10px 0 0 10px; color: #000; font-size: 18px; }
    .legend-item h2 { margin: 0 0 13px; font-size: 24px; line-height: 32px; font-weight: 400; }
    .legend-item h3 { margin: 0; font-size: 18px; line-height: 26px; font-weight: 400; white-space: nowrap; }
    .legend-item ul { margin: 0 0 7px; padding: 0; list-style: none; }
    .legend-item li { display: flex; align-items: center; gap: 9px; height: 30px; line-height: 30px; }
    .sym { width: 33px; height: 20px; flex: none; display: block; overflow: visible; }
    .frame { position: absolute; left: 0; top: 0; width: 100%; height: 100%; overflow: visible; }

    .dock { width: 868px; flex: none; display: flex; flex-direction: column; padding: 3px 0 0 12px; position: relative; }
    .dock-grip { position: absolute; left: 4px; top: 696px; width: 5px; height: 36px; background: radial-gradient(circle, #aaa 1px, transparent 2px) 0 0 / 5px 6px; }
    .tabs { display: flex; align-items: flex-end; height: 54px; border-bottom: 2px solid #acacac; box-shadow: 0 2px 0 #fafafa; flex: none; }
    .tab { height: 48px; padding: 3px 22px 0; border: 2px solid #b3b3b3; border-left-width: 1px; border-right-width: 1px; border-bottom: 0; border-radius: 6px 6px 0 0; background: #dadada; white-space: nowrap; }
    .tab.on { height: 54px; padding: 0 23px; margin-bottom: -2px; background: linear-gradient(#f6f6f6, #ebebeb); border-color: #a5a5a5; position: relative; z-index: 1; }
    .caption { display: flex; align-items: center; justify-content: space-between; height: 38px; padding: 0 0 0 8px; margin-top: 2px; flex: none; }
    .caption h2 { margin: 0; font-size: 22px; font-weight: 400; }
    .dock-btns { display: flex; gap: 6px; margin-right: -2px; }
    .dock-btn { width: 22px; height: 22px; border: 2px solid #777; border-radius: 5px; }
    .dock-btn svg { width: 16px; height: 16px; display: block; }
    .items { height: 199px; background: #fff; border: 2px solid #b5b5b5; border-right: 0; flex: none; }
    .items table { width: 100%; border-collapse: collapse; table-layout: fixed; color: #000; }
    .items th { height: 38px; padding: 0; font-weight: 400; text-align: left; background: linear-gradient(#fbfbfb, #e9e9e9); border-bottom: 2px solid #b0b0b0; border-right: 2px solid #ccc; }
    .items th svg { display: block; margin-left: 4px; }
    .items th:last-child { padding-left: 6px; border-right: 0; }
    .items .c { width: 55px; }
    .items td { height: 36px; padding: 0 0 0 6px; }
    .items td .cell { display: flex; align-items: center; gap: 15px; padding-left: 3px; }
    .items .cur { font-weight: 600; }
    .split { height: 13px; flex: none; display: flex; justify-content: center; align-items: center; }
    .split .grip { width: 34px; height: 6px; }
    input[type="checkbox"] { appearance: none; display: block; width: 28px; height: 28px; border: 2px solid #b3b3b3; background: #fff; border-radius: 2px; position: relative; flex: none; }
    input[type="checkbox"]:checked::after { content: ""; position: absolute; left: 5px; top: 3px; width: 16px; height: 19px; background: #111; clip-path: polygon(0 48%, 20% 42%, 38% 72%, 84% 0, 100% 4%, 46% 100%, 30% 100%); }
    .object { margin: 0; height: 40px; padding: 4px 0 0 10px; font-size: 26px; font-weight: 600; line-height: 32px; background: #c6c6c6; color: #000; flex: none; }
    .scroll { flex: 1; min-height: 0; display: flex; border-left: 2px solid #bdbdbd; border-top: 2px solid #bdbdbd; border-bottom: 2px solid #b5b5b5; overflow: hidden; }
    .props { flex: 1; min-width: 0; height: 100%; overflow: hidden; padding: 0 22px 0 24px; }
    .group { background: #e7e7e7; border: 2px solid #d0d0d0; border-radius: 3px; padding: 0 27px 0 24px; display: flex; flex-direction: column; }
    .general { border-top: 0; gap: 12px; padding-bottom: 23px; }
    .row { display: grid; grid-template-columns: 173px 1fr; align-items: center; height: 48px; position: relative; color: #000; }
    .scrolled { margin-top: -46px; }
    .field { background: #fff; padding: 0 10px; }
    .row .combo select { padding-left: 47px; }
    .dots { position: absolute; left: 12px; top: 10px; width: 12px; height: 28px; }
    .row-ring { inset: -18px -20px; border-radius: 30px; }
    .check { display: flex; align-items: center; gap: 11px; height: 46px; white-space: nowrap; }
    .fold { display: flex; align-items: center; gap: 17px; height: 52px; padding: 10px 0 0 3px; color: #000; }
    .fold h3 { margin: 0; font-size: 26px; font-weight: 600; }
    .fold svg { width: 22px; height: 15px; }
    .tree-group { padding-top: 27px; border-bottom: 0; height: 760px; }
    .between { display: flex; justify-content: space-between; align-items: center; height: 38px; margin-bottom: 15px; }
    .update { height: 38px; width: 127px; font-size: 20px; border: 2px solid #a9a9a9; border-radius: 5px; background: linear-gradient(#fff, #ececec); }
    .list { display: flex; height: 498px; border: 2px solid #b5b5b5; background: #fff; flex: none; overflow: hidden; }
    .list ul { margin: 0; padding: 0; list-style: none; }
    .tree { flex: 1; min-width: 0; color: #000; }
    .branch { display: flex; align-items: center; height: 36px; padding-left: 13px; }
    .branch svg.kind { width: 34px; height: 34px; margin: 0 11px 0 16px; flex: none; }
    .branch.sel { background: #2c69e4; color: #eef3fd; }
    .leaf { display: flex; align-items: center; height: 76px; padding-left: 86px; gap: 12px; }
    .leaf.pt { gap: 16px; }
    .leaf svg { width: 68px; height: 16px; flex: none; }
    .sb { width: 28px; flex: none; display: grid; border-left: 2px solid #c5c5c5; background: #e2e2e2; }
    .sb .end { background: #f6f6f6; display: grid; place-items: center; }
    .sb .thumb { background: linear-gradient(90deg, #fff, #eee); border-top: 2px solid #b5b5b5; border-bottom: 2px solid #b5b5b5; }
    .inner { grid-template-rows: 26px 204px 1fr 28px; }
    .outer { width: 24px; grid-template-rows: 27px 55px 277px 1fr 28px; }
    .actions { display: flex; gap: 6px; margin: 14px 0 12px; }
    .act { width: 48px; height: 45px; border: 2px solid #a9a9a9; border-radius: 5px; background: linear-gradient(#fdfdfd, #ebebeb); position: relative; }
    .act > svg { width: 36px; height: 36px; overflow: visible; }
    .greek { font-family: "Liberation Serif", serif; font-size: 34px; line-height: 36px; color: #7a4a86; }
    .eps { font-style: italic; }
    .sum { color: #a3189f; font-weight: 700; font-size: 36px; }
    .push { margin-left: auto; }
    .slim { width: 22px; margin-left: -4px; }
    .slim > svg.tri { width: 14px; height: 11px; }
    .act-ring { inset: -23px -28px -16px -16px; border-radius: 28px; border-width: 10px; }
    .tip { position: absolute; left: 26px; top: 49px; z-index: 5; height: 40px; padding: 0 7px; line-height: 34px; font-size: 22px; white-space: nowrap; color: #222; background: #fff; border: 2px solid #222; box-shadow: 0 14px 36px #0004; }

    .status { height: 61px; flex: none; display: flex; align-items: center; justify-content: flex-end; padding: 0 44px 0 0; background: linear-gradient(#ebebeb, #e9e9e9); border-bottom-left-radius: 18px; color: #000; position: relative; }
    .coords { display: flex; gap: 42px; margin-right: 124px; }
    .zoom { width: 255px; }
    .zoom.combo select { height: 46px; padding-left: 8px; }
    .slider { appearance: none; width: 196px; height: 28px; margin-left: 15px; background: none; }
    .slider::-webkit-slider-runnable-track { height: 10px; border: 2px solid #a9a9a9; border-radius: 5px; background: linear-gradient(90deg, #4a90e8 24px, #d8d8d8 24px); }
    .slider::-webkit-slider-thumb { appearance: none; width: 26px; height: 26px; margin-top: -10px; border: 2px solid #9f9f9f; border-radius: 6px; background: linear-gradient(#fff, #ececec); }
  `;

  private tools(list: Tool[]) {
    return list.map((t) =>
      t === "sep" ? html`<span class="sep"></span>`
      : t === "grip" ? html`<span class="grip mid"></span>`
      : html`<button class="tool" aria-label=${t.label}>${ico(t.id)}</button>`);
  }

  private ruler(axis: "h" | "v") {
    const perMm = 4.62;
    const zero = axis === "h" ? 113 : 206;
    const edge = axis === "h" ? 33 : 31;
    const last = axis === "h" ? 312 : 254;
    const marks: unknown[] = [];
    for (let mm = axis === "h" ? -18 : -44; mm <= last; mm += 2) {
      const p = Math.round(zero + mm * perMm);
      const len = mm % 20 === 0 ? 30 : mm % 10 === 0 ? 11 : 7;
      marks.push(axis === "h"
        ? svg`<path d="M${p} ${edge - len}v${len}" stroke="#444" stroke-width="2"/>${mm % 20 === 0 ? svg`<text x=${p + 3} y="19">${mm}</text>` : nothing}`
        : svg`<path d="M${edge - len} ${p}h${len}" stroke="#444" stroke-width="2"/>${mm % 20 === 0 ? svg`<text x="17" y=${p + 7} transform="rotate(-90 17 ${p + 7})" text-anchor="end">${mm}</text>` : nothing}`);
    }
    return html`<svg class="ruler ${axis}" aria-hidden="true">${marks}
      ${axis === "h" ? svg`<path d="M1551 3v30" stroke="#f0382c" stroke-width="2"/>` : svg`<path d="M1 1106h30" stroke="#f0382c" stroke-width="2"/>`}</svg>`;
  }

  private symbol(kind: string, color: string) {
    return html`<svg class="sym" viewBox="0 0 33 20" aria-hidden="true">${
      kind === "dot" ? svg`<circle cx="17" cy="10" r="3.6" fill=${color} stroke="#808080"/>`
      : kind === "fill" ? svg`<rect x="0" y="1" width="33" height="18" fill=${color} stroke="#808080" stroke-width="1.6"/>`
      : svg`<path d="M-1 9h34" stroke=${color} stroke-width="2.4" stroke-dasharray=${kind === "dash" ? "11 3 5 2 5 2" : "none"}/>`}</svg>`;
  }

  private legend() {
    return html`<section class="legend-item">
      <h2>Legend</h2>
      ${legendGroups.map((g) => html`<h3>${g.title}</h3><ul>${g.rows.map((r) => html`<li>${this.symbol(r.kind, r.color)}<span>${r.text}</span></li>`)}</ul>`)}
      <svg class="frame" viewBox="0 0 397 540" aria-hidden="true">
        <rect x="0.5" y="0.5" width="396" height="539" fill="none" stroke="#3d8fc6"/>
        <rect x="0.5" y="0.5" width="396" height="539" fill="none" stroke="#6b0028" stroke-dasharray="4 3"/>
        ${[[0.5, 0.5], [188.5, 0.5], [376.5, 0.5], [0.5, 259.5], [376.5, 259.5], [0.5, 519.5], [188.5, 519.5], [376.5, 519.5]].map(([x, y]) =>
          svg`<rect x=${x} y=${y} width="20" height="20" fill="#fff" stroke="#3d8fc6"/>`)}
      </svg>
    </section>`;
  }

  private caption(text: string) {
    return html`<div class="caption"><h2>${text}</h2><span class="dock-btns">
      <button class="dock-btn" aria-label="Float"><svg viewBox="0 0 16 16"><path d="M6 2h8v8H6zM2 6h7v8H2z" fill="none" stroke="#666" stroke-width="2"/></svg></button>
      <button class="dock-btn" aria-label="Close"><svg viewBox="0 0 16 16"><path d="M2 2l12 12M14 2L2 14" stroke="#666" stroke-width="4"/></svg></button>
    </span></div>`;
  }

  private leaf(text: string, color: string, kind: "pt" | "line" | "dash") {
    return html`<li class="leaf ${kind}"><svg viewBox="0 0 68 16" aria-hidden="true">${
      kind === "pt" ? svg`<circle cx="36" cy="8" r="5" fill=${color} stroke="#8a8a8a" stroke-width="2"/>`
      : svg`<path d="M0 8h68" stroke=${color} stroke-width="4" stroke-dasharray=${kind === "dash" ? "12 4 6 2 6 2" : "none"}/>`}</svg><span>${text}</span></li>`;
  }

  private dock() {
    return html`<aside class="dock">
      <span class="dock-grip"></span>
      <div class="tabs" role="tablist"><button class="tab on" role="tab" aria-selected="true">Items</button><button class="tab" role="tab">Undo History</button></div>
      ${this.caption("Items")}
      <div class="items"><table>
        <thead><tr>
          <th class="c"><svg width="32" height="24" viewBox="0 0 32 24" role="img" aria-label="Visible"><path d="M1 6Q16-3 30 6M1 13q14-14 30 0-15 14-30 0z" fill="#f4f4f4" stroke="#8b8b84" stroke-width="2"/><circle cx="16" cy="12" r="7.5" fill="#a3a79c" stroke="#6c6f68" stroke-width="1.6"/><circle cx="16" cy="12" r="3" fill="#222"/><circle cx="18" cy="9" r="1.6" fill="#fff"/></svg></th>
          <th class="c"><svg width="32" height="32" viewBox="0 0 32 32" role="img" aria-label="Locked"><path d="M8 18v-6q0-8 8-8t8 8v6" fill="none" stroke="#8a8a8a" stroke-width="4.6"/><path d="M8 18v-6q0-8 8-8t8 8v6" fill="none" stroke="#eee" stroke-width="1.4"/><rect x="4" y="16" width="24" height="16" rx="3" fill="#636363"/></svg></th>
          <th>Item</th></tr></thead>
        <tbody>
          <tr><td><input type="checkbox" checked aria-label="Legend visible"></td><td><input type="checkbox" aria-label="Legend locked"></td>
            <td class="cur"><span class="cell"><svg width="28" height="28" viewBox="0 0 28 28" aria-hidden="true"><g fill="#fff" stroke="#444" stroke-width="2"><rect x="1" y="1" width="6" height="6"/><rect x="1" y="11" width="6" height="6"/><rect x="1" y="21" width="6" height="6"/></g><path d="M11 4h11M11 14h17M11 24h8" stroke="#b0b0b0" stroke-width="4"/></svg>Legend</span></td></tr>
          <tr><td><input type="checkbox" checked aria-label="Map 1 visible"></td><td><input type="checkbox" aria-label="Map 1 locked"></td>
            <td><span class="cell"><svg width="28" height="28" viewBox="0 0 28 28" aria-hidden="true"><path d="M4 3h23v22H4z" fill="#d8d8d8" stroke="#8a8a8a" stroke-width="2"/><path d="M1 2q4-2 5 2v19l-3 3H1z" fill="#eee" stroke="#8a8a8a" stroke-width="1.6"/></svg>Map 1</span></td></tr>
        </tbody></table></div>
      <div class="split"><span class="grip"></span></div>
      <div class="tabs" role="tablist"><button class="tab" role="tab">Layout</button><button class="tab on" role="tab" aria-selected="true">Item Properties</button><button class="tab" role="tab">Guides</button></div>
      ${this.caption("Item Properties")}
      <h2 class="object">Legend</h2>
      <div class="scroll">
        <div class="props">
          <div class="group general">
            <div class="row scrolled"><span></span><input class="field" aria-label="Title"></div>
            <div class="row"><label for="wrap">Wrap text on</label><input class="field" id="wrap"></div>
            <div class="row"><label for="arr">Arrangement</label>
              <span class="combo"><select id="arr"><option>Symbols on Left</option></select>
                <svg class="dots" viewBox="0 0 12 28" aria-hidden="true"><path d="M2 2h7v5H2zM2 11h7v5H2zM2 20h7v5H2z" fill="#888" stroke="#666"/></svg>${tri("down")}</span>
              <span class="ring row-ring"></span></div>
            <label class="check"><input type="checkbox" checked>Resize to fit contents</label>
          </div>
          <div class="fold"><svg viewBox="0 0 22 15" aria-hidden="true"><path d="M1 1h20L11 14z" fill="#444" stroke="#111" stroke-width="2"/></svg><h3>Legend Items</h3></div>
          <div class="group tree-group">
            <div class="between"><label class="check"><input type="checkbox">Auto update</label><button class="update">Update All</button></div>
            <div class="list">
              <ul class="tree">
                <li><div class="branch sel"><svg class="tri" viewBox="0 0 16 12"><path d="M0 1h16L8 11z" fill="#12295c"/></svg>
                  <svg class="kind" viewBox="0 0 34 34" aria-hidden="true"><g fill="#dbe6f5" stroke="#8f9bb0" stroke-width="1.6"><circle cx="9" cy="27" r="2.6"/><circle cx="13" cy="13" r="2.6"/><circle cx="27" cy="7" r="2.6"/></g></svg>Schools_Within200m_CyclingRoutes</div>
                  <ul>${this.leaf("Academies", "#4a63e0", "pt")}${this.leaf("Community Schools", "#56ced4", "pt")}${this.leaf("Free Schools", "#d8408a", "pt")}${this.leaf("Foundation/Voluntary Schools", "#c59b30", "pt")}</ul></li>
                <li><div class="branch">${tri("down")}
                  <svg class="kind" viewBox="0 0 34 34" aria-hidden="true"><g fill="#fff" stroke="#888" stroke-width="2"><path d="M5 8l8 20 9-23h9" fill="none"/><circle cx="5" cy="8" r="2.4"/><circle cx="13" cy="29" r="2.4"/><circle cx="22" cy="4" r="2.4"/><circle cx="31" cy="4" r="2.4"/></g></svg>ULEZ_CycleRoutes</div>
                  <ul>${this.leaf("In Progress", "#98c58a", "dash")}${this.leaf("Open", "#8bbb7c", "line")}</ul></li>
              </ul>
              <div class="sb inner"><span class="end">${tri("up")}</span><span class="thumb"></span><span></span><span class="end">${tri("down")}</span></div>
            </div>
            <div class="actions">
              <button class="act" aria-label="Move down"><svg viewBox="0 0 36 36"><path d="M5 7h27L18 29z" fill="#6b9bd0" stroke="#2f5680" stroke-width="2"/></svg></button>
              <button class="act" aria-label="Move up"><svg viewBox="0 0 36 36"><path d="M18 7l14 22H4z" fill="#6b9bd0" stroke="#2f5680" stroke-width="2"/></svg></button>
              <button class="act" aria-label="Add group"><svg viewBox="0 0 36 36"><path d="M3 14v18h16M8 8h16v20H8zM12 4h16v18" fill="none" stroke="#888" stroke-width="2"/><path d="M18 22V4q3-5 5 0v15" fill="none" stroke="#43648f" stroke-width="2"/><rect x="20" y="22" width="13" height="13" rx="3" fill="#548a52"/><path d="M26.5 24v9M22 28.5h9" stroke="#fff" stroke-width="2.6"/></svg></button>
              <button class="act" aria-label="Add layer"><svg viewBox="0 0 36 36"><path d="M14 4h8v10h10v8H22v10h-8V22H4v-8h10z" fill="#fff" stroke="#3c7c3c" stroke-width="2"/><path d="M18 8v20M8 18h20" stroke="#5a9a55" stroke-width="4"/></svg></button>
              <button class="act" aria-label="Remove"><svg viewBox="0 0 36 36"><rect x="4" y="12" width="28" height="12" fill="#fff" stroke="#e5484d" stroke-width="2"/><path d="M7 18h22" stroke="#ee5555" stroke-width="5"/></svg></button>
              <button class="act" aria-label="Edit" aria-describedby="tip"><svg viewBox="0 0 36 36"><path d="M4 3h16l8 8v23H4z" fill="#fff" stroke="#999" stroke-width="2"/><path d="M20 3v8h8" fill="none" stroke="#999" stroke-width="2"/><path d="M24 7l6 3-9 19-7 5 1-9z" fill="#d9c13a" stroke="#75671f" stroke-width="1.6"/><path d="M14 34l1-7 4 3z" fill="#555"/><path d="M24 7l3-4 5 3-2 4z" fill="#ddd" stroke="#999"/></svg>
                <span class="tip" id="tip" role="tooltip">Edit selected item properties</span><span class="ring act-ring"></span></button>
              <button class="act greek eps" aria-label="Expression">Ɛ</button>
              <button class="act greek sum" aria-label="Show feature count">Σ</button>
              <button class="act push" aria-label="Filter by expression"><svg viewBox="0 0 36 36"><text x="2" y="24" font-family="Liberation Serif, serif" font-style="italic" font-size="32" fill="#7a4a86">Ɛ</text><path d="M20 20h13v5l-2 3v8h-3V26h-3v10h-3v-8l-2-3z" fill="#9a9a94"/></svg></button>
              <button class="act slim" aria-label="Filter options">${tri("down")}</button>
            </div>
            <label class="check"><input type="checkbox">Only show items inside linked maps</label>
          </div>
        </div>
        <div class="sb outer"><span class="end">${tri("up")}</span><span></span><span class="thumb"></span><span></span><span class="end">${tri("down")}</span></div>
      </div>
    </aside>`;
  }

  render() {
    return html`
      <svg class="behind" aria-hidden="true">
        <path d="M0 120h8M0 205h8M0 287h8M0 392h8M0 1020h8M0 1048h8M0 1162h8M0 1640h8" stroke="#9b9c9d" stroke-width="2"/>
        <rect width="8" height="6" fill="#5b9bd5"/><rect y="150" width="7" height="32" fill="#5c7fae"/><rect y="180" width="7" height="18" fill="#c09a2b"/>
        <rect y="228" width="8" height="48" fill="#6ea564"/><circle cx="9" cy="244" r="8" fill="none" stroke="#dfe6e2" stroke-width="3"/>
        <rect y="1136" width="3" height="6" fill="#d23c3c"/><rect y="1370" width="8" height="28" fill="#adadad"/><rect y="1398" width="8" height="4" fill="#111"/>
        <g font-family="Liberation Sans, sans-serif" font-size="24" font-weight="700" fill="#111" text-anchor="end">
          <text x="10" y="458">si</text><text x="10" y="493">ol</text><text x="12" y="565">s</text><text x="7" y="672">n</text><text x="10" y="745">si</text><text x="4" y="846">f</text><text x="10" y="1612" fill="#777">c</text></g>
      </svg>
      <header class="title"><span class="lights"><span class="light red"></span><span class="light amber"></span><span class="light green"></span></span><h1 class="name">*Session5-Layout</h1></header>
      <div class="bar" role="toolbar" aria-label="Layout">
        <span class="grip"></span>
        <button class="tool" aria-label="Save Project">${ico("save")}<span class="ring save-ring"></span></button>
        ${this.tools(mainTools)}
        <span class="combo edit page-no"><select disabled aria-label="Atlas page"><option>1</option></select>${tri("down")}</span>
        ${this.tools(atlasTools)}
        <button class="tool" aria-label="Export Atlas">${ico("exportOff")}</button>
        <button class="drop" aria-label="Export options">${tri("down")}</button>
        <button class="tool" aria-label="Atlas Settings">${ico("settings")}</button>
      </div>
      <div class="bar" role="toolbar" aria-label="View and arrange"><span class="grip"></span>${this.tools(viewTools)}</div>
      <div class="main">
        <nav class="side" aria-label="Toolbox"><span class="grip"></span>
          ${sideTools.map(([id, label]) => html`<button class="tool ${id === "select" ? "on" : ""}" aria-label=${label}>${ico(id)}</button>`)}</nav>
        <section class="stage">${this.ruler("h")}${this.ruler("v")}
          <div class="view"><div class="page"><london-map class="map-item"></london-map>${this.legend()}</div></div>
        </section>
        ${this.dock()}
      </div>
      <footer class="status">
        <div class="coords"><span>x: 311.122 mm</span><span>y: 194.722 mm</span><span>page: 1</span></div>
        <span class="combo edit zoom"><select aria-label="Zoom"><option>81.5%</option></select>${tri("down")}</span>
        <input class="slider" type="range" min="0" max="100" value="8" aria-label="Zoom level">
      </footer>`;
  }
}
